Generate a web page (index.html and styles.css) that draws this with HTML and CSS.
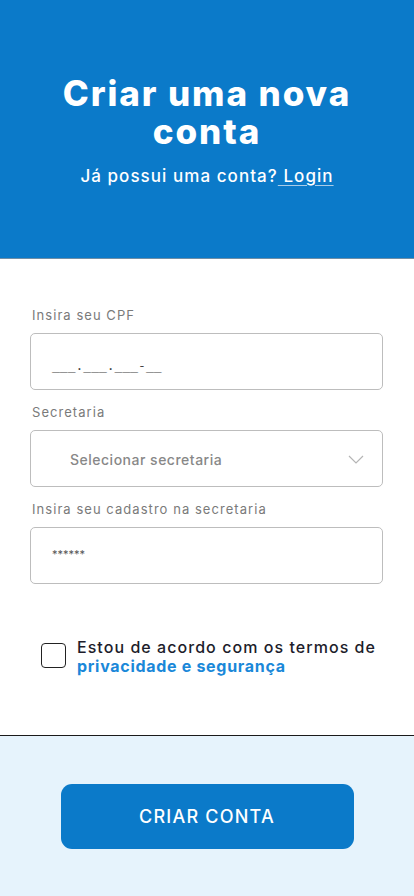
FILE: index.html
```html
<!DOCTYPE html>
<html lang="pt">
<head>
<meta charset="utf-8">
<link rel="stylesheet" href="styles.css">
</head>
<body>
<div class="page">
  <header class="hero">
    <h1 class="title">Criar uma nova conta</h1>
    <p class="subtitle">Já possui uma conta?<a class="login" href="#"> Login</a></p>
  </header>
  <main class="form">
    <div class="field">
      <label class="label">Insira seu CPF</label>
      <div class="box"><span class="value mask">___.___.___-__</span></div>
    </div>
    <div class="field">
      <label class="label">Secretaria</label>
      <div class="box select">
        <span class="placeholder">Selecionar secretaria</span>
        <svg class="chev" width="16" height="9" viewBox="0 0 16 9"><path d="M1 1l7 7 7-7" fill="none" stroke="#b5b5b5" stroke-width="1.2"/></svg>
      </div>
    </div>
    <div class="field">
      <label class="label">Insira seu cadastro na secretaria</label>
      <div class="box"><span class="value stars">******</span></div>
    </div>
    <div class="agree">
      <span class="check"></span>
      <p class="agree-text">Estou de acordo com os termos de <a class="terms" href="#">privacidade e segurança</a></p>
    </div>
  </main>
  <footer class="bottom">
    <button class="cta">CRIAR CONTA</button>
  </footer>
</div>
</body>
</html>
```
FILE: styles.css
```css
* { box-sizing: border-box; }
html, body { margin: 0; padding: 0; }
body {
  font-family: "Inter", "Noto Sans", sans-serif;
  background: #fff;
}
.page {
  width: 414px;
  height: 896px;
  display: flex;
  flex-direction: column;
}
.hero {
  background: #0b7ac9;
  height: 259px;
  border-bottom: 1px solid #6f8ea6;
  display: flex;
  flex-direction: column;
  align-items: center;
  padding-top: 74px;
  color: #fff;
}
.title {
  margin: 0;
  width: 330px;
  text-align: center;
  font-size: 35px;
  line-height: 38px;
  font-weight: 800;
  letter-spacing: 1.9px;
}
.subtitle {
  margin: 15px 0 0;
  font-size: 17px;
  line-height: 22px;
  font-weight: 500;
  letter-spacing: 1.05px;
}
.login {
  color: #fff;
  text-decoration: underline;
  text-decoration-color: #a9cce8;
  text-underline-offset: 3px;
}
.form {
  flex: 1;
  padding: 48px 31px 0 30px;
  display: flex;
  flex-direction: column;
  border-bottom: 1px solid #1a1a1a;
}
.field {
  display: flex;
  flex-direction: column;
  margin-bottom: 14px;
}
.label {
  font-size: 13px;
  line-height: 16px;
  color: #7a7a7a;
  letter-spacing: 1.05px;
  padding-left: 2px;
  margin-bottom: 10px;
}
.box {
  height: 57px;
  border: 1px solid #bdbdbd;
  border-radius: 5px;
  display: flex;
  align-items: center;
  padding: 0 21px;
}
.value {
  font-size: 13px;
  color: #555;
}
.mask {
  font-family: "DejaVu Sans Mono", monospace;
  padding-top: 7px;
  color: #444;
}
.stars {
  font-size: 11px;
  color: #555;
  letter-spacing: 0;
  margin-top: -4px;
}
.select {
  padding: 0 18px 0 39px;
  justify-content: space-between;
}
.placeholder {
  font-size: 14px;
  color: #888;
  letter-spacing: 0.5px;
  font-weight: 500;
  padding-top: 1px;
}
.chev { margin-top: 1px; }
.agree {
  margin-top: 42px;
  display: flex;
  align-items: flex-start;
  padding-left: 11px;
}
.check {
  width: 25px;
  height: 25px;
  border: 1.5px solid #222;
  border-radius: 4px;
  margin-top: 3px;
  flex: none;
}
.agree-text {
  margin: -2px 0 0 11px;
  font-size: 16px;
  line-height: 19px;
  color: #1d1d2b;
  font-weight: 500;
  letter-spacing: 1.05px;
}
.terms {
  color: #1a88d9;
  font-weight: 700;
  letter-spacing: 0.7px;
  text-decoration: none;
}
.bottom {
  height: 160px;
  background: #e6f3fc;
  display: flex;
  justify-content: center;
  padding-top: 48px;
}
.cta {
  width: 293px;
  height: 65px;
  border: none;
  border-radius: 11px;
  background: #0b7ac9;
  color: #fff;
  font-family: "Inter", "Noto Sans", sans-serif;
  font-size: 18px;
  font-weight: 500;
  letter-spacing: 1.2px;
}
```
